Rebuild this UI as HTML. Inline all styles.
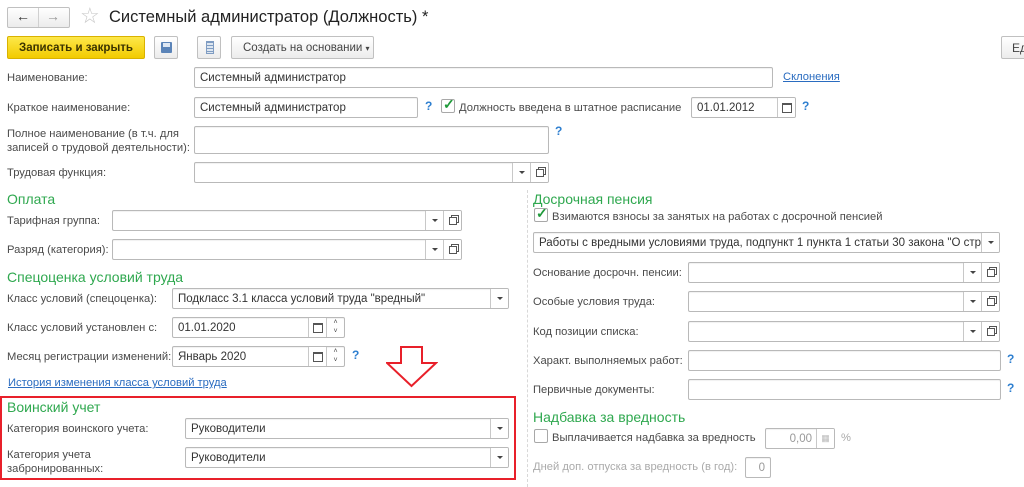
<!DOCTYPE html>
<html><head><meta charset="utf-8"><style>
*{box-sizing:border-box;margin:0;padding:0}
body{width:1024px;height:487px;background:#fff;font-family:"Liberation Sans",Arial,sans-serif;font-size:11.2px;color:#4a4a4a;position:relative;overflow:hidden}
.a{position:absolute;white-space:nowrap}
.lb{position:absolute;white-space:nowrap;line-height:14px}
.in{position:absolute;border:1px solid #b9b9b9;border-radius:2px;background:#fff;height:21px;box-shadow:inset 0 1px 1px rgba(0,0,0,.06);color:#333;font-size:11.5px;line-height:21px;padding:0 5px;white-space:nowrap;overflow:hidden}
.sep{position:absolute;top:0;bottom:0;width:18px;border-left:1px solid #c8c8c8;background:#fff;display:flex;align-items:center;justify-content:center}
.dd::after{content:"";border-left:3px solid transparent;border-right:3px solid transparent;border-top:3px solid #444}
.op::after{content:"";width:6px;height:6px;border:1px solid #555;box-shadow:2px -2px 0 -1px #fff,2px -2px 0 0 #555}
.cal::after{content:"";width:8px;height:7px;border:1px solid #555;border-top-width:2px}
.h{position:absolute;color:#2fa84f;font-size:14px;white-space:nowrap}
.q{position:absolute;color:#2e7fd0;font-weight:bold;font-size:12px}
.btn{position:absolute;border:1px solid #c0c0c0;border-radius:2px;background:linear-gradient(#fff,#ececec);height:23px}
.cb{position:absolute;width:14px;height:14px;border:1px solid #a8a8a8;border-radius:2px;background:#fff}
.spin{position:absolute;top:0;bottom:0;width:18px;border-left:1px solid #c8c8c8;font-size:7px;line-height:9px;text-align:center;color:#444}
</style></head><body>
<div class="btn" style="left:7px;top:7px;width:63px;height:21px"></div>
<div class="a" style="left:38px;top:8px;height:19px;border-left:1px solid #d0d0d0"></div>
<div class="a" style="left:16px;top:8px;font-size:14px;color:#333;font-weight:bold">←</div>
<div class="a" style="left:46px;top:8px;font-size:14px;color:#999;font-weight:bold">→</div>
<div class="a" style="left:80px;top:3px;font-size:22px;color:#c8c8c8">☆</div>
<div class="a" style="left:109px;top:8px;font-size:16.5px;color:#222">Системный администратор (Должность) *</div>
<div class="a" style="left:7px;top:36px;width:138px;height:23px;background:linear-gradient(#fde84a,#f2cb00);border:1px solid #d9b200;border-radius:2px;text-align:center;line-height:23px;font-weight:bold;color:#3a3300;font-size:11.5px">Записать и закрыть</div>
<div class="btn" style="left:154px;top:36px;width:24px"><div class="a" style="left:6px;top:5px;width:11px;height:11px;background:#5b84b8;border-radius:1px"><div class="a" style="left:2px;top:1px;width:7px;height:4px;background:#dfe8f3"></div></div></div>
<div class="btn" style="left:197px;top:36px;width:24px"><div class="a" style="left:8px;top:4px;width:8px;height:13px;background:repeating-linear-gradient(#7f9cc2 0 1px,#dde6f0 1px 3px);border:1px solid #7f9cc2"></div></div>
<div class="btn" style="left:231px;top:36px;width:143px;line-height:22px;padding-left:11px;font-size:11.5px;color:#444">Создать на основании <span style="font-size:8px">▾</span></div>
<div class="btn" style="left:1001px;top:36px;width:30px;line-height:22px;padding-left:10px;font-size:12px;color:#444">Ед</div>
<div class="lb" style="left:7px;top:71px">Наименование:</div>
<div class="in" style="left:194px;top:67px;width:579px">Системный администратор</div>
<div class="a" style="left:783px;top:71px;color:#2a6cc0;text-decoration:underline">Склонения</div>
<div class="lb" style="left:7px;top:101px">Краткое наименование:</div>
<div class="in" style="left:194px;top:97px;width:224px">Системный администратор</div>
<div class="q" style="left:425px;top:99px">?</div>
<div class="cb" style="left:441px;top:99px"><span class="a" style="left:1px;top:-4px;color:#1f9a3a;font-size:14px;font-weight:bold">✓</span></div>
<div class="lb" style="left:459px;top:101px">Должность введена в штатное расписание</div>
<div class="in" style="left:691px;top:97px;width:105px">01.01.2012<div class="sep cal" style="right:0"></div></div>
<div class="q" style="left:802px;top:99px">?</div>
<div class="lb" style="left:7px;top:127px">Полное наименование (в т.ч. для<br>записей о трудовой деятельности):</div>
<div class="in" style="left:194px;top:126px;width:355px;height:28px"></div>
<div class="q" style="left:555px;top:124px">?</div>
<div class="lb" style="left:7px;top:166px">Трудовая функция:</div>
<div class="in" style="left:194px;top:162px;width:355px"><div class="sep dd" style="right:18px"></div><div class="sep op" style="right:0"></div></div>
<div class="a" style="left:527px;top:190px;height:297px;border-left:1px dashed #d8d8d8"></div>
<div class="h" style="left:7px;top:191px">Оплата</div>
<div class="lb" style="left:7px;top:214px">Тарифная группа:</div>
<div class="in" style="left:112px;top:210px;width:350px"><div class="sep dd" style="right:18px"></div><div class="sep op" style="right:0"></div></div>
<div class="lb" style="left:7px;top:243px">Разряд (категория):</div>
<div class="in" style="left:112px;top:239px;width:350px"><div class="sep dd" style="right:18px"></div><div class="sep op" style="right:0"></div></div>
<div class="h" style="left:7px;top:269px">Спецоценка условий труда</div>
<div class="lb" style="left:7px;top:292px">Класс условий (спецоценка):</div>
<div class="in" style="left:172px;top:288px;width:337px">Подкласс 3.1 класса условий труда "вредный"<div class="sep dd" style="right:0"></div></div>
<div class="lb" style="left:7px;top:321px">Класс условий установлен с:</div>
<div class="in" style="left:172px;top:317px;width:173px">01.01.2020<div class="sep cal" style="right:18px"></div><div class="spin" style="right:0">˄<br>˅</div></div>
<div class="lb" style="left:7px;top:350px">Месяц регистрации изменений:</div>
<div class="in" style="left:172px;top:346px;width:173px">Январь 2020<div class="sep cal" style="right:18px"></div><div class="spin" style="right:0">˄<br>˅</div></div>
<div class="q" style="left:352px;top:348px">?</div>
<div class="a" style="left:8px;top:377px;color:#2a6cc0;text-decoration:underline">История изменения класса условий труда</div>
<svg class="a" style="left:386px;top:346px" width="52" height="42" viewBox="0 0 52 42"><path d="M15 1H36V17H50L25.5 40L1 17H15Z" fill="none" stroke="#e8202a" stroke-width="2"/></svg>
<div class="a" style="left:0;top:396px;width:516px;height:84px;border:2px solid #e8202a"></div>
<div class="h" style="left:7px;top:399px">Воинский учет</div>
<div class="lb" style="left:7px;top:422px">Категория воинского учета:</div>
<div class="in" style="left:185px;top:418px;width:324px">Руководители<div class="sep dd" style="right:0"></div></div>
<div class="lb" style="left:7px;top:448px">Категория учета<br>забронированных:</div>
<div class="in" style="left:185px;top:447px;width:324px">Руководители<div class="sep dd" style="right:0"></div></div>
<div class="h" style="left:533px;top:191px">Досрочная пенсия</div>
<div class="cb" style="left:534px;top:208px"><span class="a" style="left:1px;top:-4px;color:#1f9a3a;font-size:14px;font-weight:bold">✓</span></div>
<div class="lb" style="left:552px;top:210px">Взимаются взносы за занятых на работах с досрочной пенсией</div>
<div class="in" style="left:533px;top:232px;width:467px">Работы с вредными условиями труда, подпункт 1 пункта 1 статьи 30 закона "О страх<div class="sep dd" style="right:0"></div></div>
<div class="lb" style="left:533px;top:266px">Основание досрочн. пенсии:</div>
<div class="in" style="left:688px;top:262px;width:312px"><div class="sep dd" style="right:18px"></div><div class="sep op" style="right:0"></div></div>
<div class="lb" style="left:533px;top:295px">Особые условия труда:</div>
<div class="in" style="left:688px;top:291px;width:312px"><div class="sep dd" style="right:18px"></div><div class="sep op" style="right:0"></div></div>
<div class="lb" style="left:533px;top:325px">Код позиции списка:</div>
<div class="in" style="left:688px;top:321px;width:312px"><div class="sep dd" style="right:18px"></div><div class="sep op" style="right:0"></div></div>
<div class="lb" style="left:533px;top:354px">Характ. выполняемых работ:</div>
<div class="in" style="left:688px;top:350px;width:313px"></div>
<div class="q" style="left:1007px;top:352px">?</div>
<div class="lb" style="left:533px;top:383px">Первичные документы:</div>
<div class="in" style="left:688px;top:379px;width:313px"></div>
<div class="q" style="left:1007px;top:381px">?</div>
<div class="h" style="left:533px;top:409px">Надбавка за вредность</div>
<div class="cb" style="left:534px;top:429px"></div>
<div class="lb" style="left:552px;top:431px">Выплачивается надбавка за вредность</div>
<div class="in" style="left:765px;top:428px;width:70px;color:#999;text-align:right;padding-right:22px">0,00<div class="sep" style="right:0;color:#bbb;font-size:9px">▦</div></div>
<div class="lb" style="left:841px;top:431px;color:#aaa">%</div>
<div class="lb" style="left:533px;top:460px;color:#aaa">Дней доп. отпуска за вредность (в год):</div>
<div class="in" style="left:745px;top:457px;width:26px;text-align:right;color:#999">0</div>
</body></html>
